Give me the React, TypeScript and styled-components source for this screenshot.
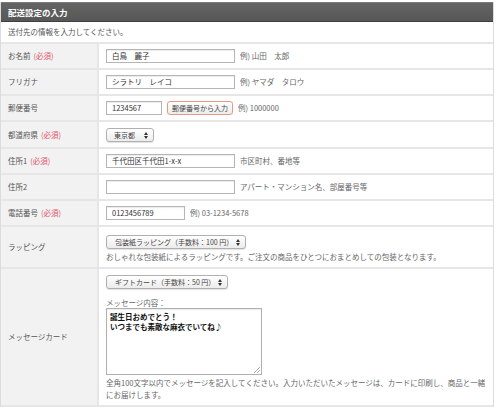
import React from "react";
import styled, { createGlobalStyle } from "styled-components";

const Global = createGlobalStyle`
  html, body { margin: 0; padding: 0; background: #fff; }
  body {
    font-family: "Noto Sans CJK JP", "Noto Sans", sans-serif;
    font-size: 7.5px;
    line-height: 12px;
    color: #555;
  }
`;

const Panel = styled.div`
  width: 492px;
  margin-top: 2px;
  border-left: 1px solid #dcdcdc;
  border-right: 1px solid #dcdcdc;
`;

const Header = styled.div`
  height: 18px;
  line-height: 18px;
  background: linear-gradient(#646464, #575757);
  border-top: 1px solid #7a7a7a;
  border-bottom: 1px solid #3f3f3f;
  color: #fff;
  font-weight: bold;
  font-size: 8.5px;
  padding-left: 7px;
`;

const Intro = styled.div`
  height: 20px;
  line-height: 20px;
  padding-left: 7px;
  color: #555;
  border-bottom: 2px solid #e6e6e6;
`;

const Row = styled.div`
  display: grid;
  grid-template-columns: 98px 1fr;
  border-bottom: 2px solid #e6e6e6;
`;

const Label = styled.div`
  background: #f2f2f2;
  border-right: 2px solid #e6e6e6;
  padding-left: 7px;
  display: flex;
  align-items: center;
  color: #555;
`;

const Required = styled.span`
  color: #e2536d;
  margin-left: 3px;
`;

const Value = styled.div<{ $pt?: number; $pb?: number }>`
  padding: ${(p) => p.$pt ?? 5}px 7px ${(p) => p.$pb ?? 5}px 7px;
  display: flex;
  flex-direction: column;
  justify-content: center;
`;

const Line = styled.div`
  display: flex;
  align-items: center;
  gap: 5px;
  height: 14px;
`;

const Input = styled.div<{ $w: number }>`
  width: ${(p) => p.$w}px;
  height: 14px;
  box-sizing: border-box;
  border: 1px solid #b5b5b5;
  box-shadow: inset 0 1px 1px rgba(0, 0, 0, 0.08);
  background: #fff;
  padding-left: 5px;
  display: flex;
  align-items: center;
  color: #333;
  white-space: pre;
`;

const Hint = styled.span`
  color: #666;
  white-space: pre;
`;

const ZipButton = styled.div`
  width: 66px;
  height: 14px;
  box-sizing: border-box;
  border: 1px solid #e39b84;
  border-radius: 3px;
  background: linear-gradient(#fdfdfd, #ececec);
  display: flex;
  align-items: center;
  justify-content: center;
  color: #444;
  font-size: 7px;
`;

const Select = styled.div<{ $w: number; $pl: number }>`
  width: ${(p) => p.$w}px;
  height: 14px;
  box-sizing: border-box;
  border: 1px solid #b0b0b0;
  border-radius: 3px;
  background: linear-gradient(#ffffff, #ececec);
  box-shadow: 0 1px 1px rgba(0, 0, 0, 0.12);
  display: flex;
  align-items: center;
  justify-content: space-between;
  padding: 0 5px 0 ${(p) => p.$pl}px;
  color: #444;
  font-size: 7px;
  white-space: pre;
`;

const Arrows = () => (
  <svg width="4" height="7" viewBox="0 0 4 7">
    <path d="M0 3 L2 0 L4 3 Z" fill="#333" />
    <path d="M0 4 L2 7 L4 4 Z" fill="#333" />
  </svg>
);

const Note = styled.div<{ $mt?: number; $lh?: number }>`
  margin-top: ${(p) => p.$mt ?? 0}px;
  line-height: ${(p) => p.$lh ?? 12}px;
  color: #666;
`;

const TextArea = styled.div`
  width: 156px;
  height: 67px;
  box-sizing: border-box;
  border: 1px solid #b0b0b0;
  box-shadow: inset 0 1px 1px rgba(0, 0, 0, 0.08);
  padding: 3px 3px;
  line-height: 9.5px;
  color: #111;
  font-weight: bold;
  font-size: 7.5px;
  position: relative;
  white-space: pre;
`;

const Grip = styled.svg`
  position: absolute;
  right: 1px;
  bottom: 1px;
`;

type RowProps = { label: string; req?: boolean; children: React.ReactNode; pt?: number; pb?: number };

const FormRow = ({ label, req, children, pt, pb }: RowProps) => (
  <Row>
    <Label>
      {label}
      {req && <Required>(必須)</Required>}
    </Label>
    <Value $pt={pt} $pb={pb}>{children}</Value>
  </Row>
);

export default function App() {
  return (
    <>
      <Global />
      <Panel>
        <Header>配送設定の入力</Header>
        <Intro>送付先の情報を入力してください。</Intro>
        <FormRow label="お名前" req>
          <Line>
            <Input $w={129}>{"白鳥　麗子"}</Input>
            <Hint>{"例) 山田　太郎"}</Hint>
          </Line>
        </FormRow>
        <FormRow label="フリガナ">
          <Line>
            <Input $w={129}>{"シラトリ　レイコ"}</Input>
            <Hint>{"例) ヤマダ　タロウ"}</Hint>
          </Line>
        </FormRow>
        <FormRow label="郵便番号">
          <Line>
            <Input $w={56}>1234567</Input>
            <ZipButton>郵便番号から入力</ZipButton>
            <Hint>{"例) 1000000"}</Hint>
          </Line>
        </FormRow>
        <FormRow label="都道府県" req pt={6}>
          <Line>
            <Select $w={48} $pl={7}>
              東京都
              <Arrows />
            </Select>
          </Line>
        </FormRow>
        <FormRow label="住所1" req>
          <Line>
            <Input $w={129}>千代田区千代田1-x-x</Input>
            <Hint>市区町村、番地等</Hint>
          </Line>
        </FormRow>
        <FormRow label="住所2">
          <Line>
            <Input $w={129} />
            <Hint>アパート・マンション名、部屋番号等</Hint>
          </Line>
        </FormRow>
        <FormRow label="電話番号" req>
          <Line>
            <Input $w={79}>0123456789</Input>
            <Hint>{"例) 03-1234-5678"}</Hint>
          </Line>
        </FormRow>
        <FormRow label="ラッピング" pt={8} pb={4}>
          <Line>
            <Select $w={140} $pl={8}>
              包装紙ラッピング（手数料：100 円）
              <Arrows />
            </Select>
          </Line>
          <Note $mt={2}>おしゃれな包装紙によるラッピングです。ご注文の商品をひとつにおまとめしての包装となります。</Note>
        </FormRow>
        <FormRow label="メッセージカード" pt={6} pb={4}>
          <Line>
            <Select $w={122} $pl={8}>
              ギフトカード（手数料：50 円）
              <Arrows />
            </Select>
          </Line>
          <Note $mt={8} $lh={11}>メッセージ内容：</Note>
          <TextArea>
            {"誕生日おめでとう！\nいつまでも素敵な麻衣でいてね♪"}
            <Grip width="7" height="7" viewBox="0 0 7 7">
              <path d="M1 7 L7 1 M4 7 L7 4" stroke="#999" strokeWidth="0.8" />
            </Grip>
          </TextArea>
          <Note $mt={2}>
            全角100文字以内でメッセージを記入してください。入力いただいたメッセージは、カードに印刷し、商品と一緒にお届けします。
          </Note>
        </FormRow>
      </Panel>
    </>
  );
}
